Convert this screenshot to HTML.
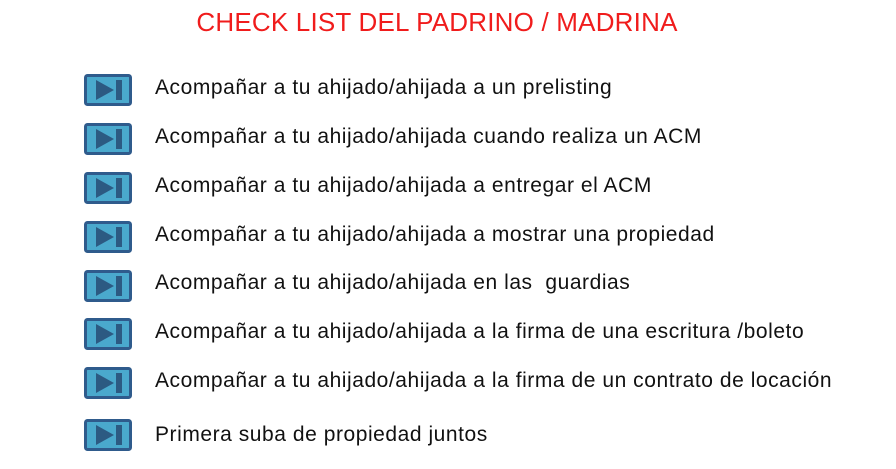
<!DOCTYPE html>
<html><head><meta charset="utf-8"><style>
body{margin:0;width:896px;height:469px;background:#fff;position:relative;overflow:hidden;font-family:"Liberation Sans",sans-serif}
.t{position:absolute;left:0;width:874px;top:7px;text-align:center;color:#f01c1c;font-size:26px;line-height:30px;letter-spacing:0.2px}
.i{position:absolute;left:84px;width:48px;height:32px}
.x{position:absolute;left:155px;font-size:21px;color:#111;white-space:nowrap;line-height:24px;letter-spacing:0.55px}
</style></head><body>
<div class="t">CHECK LIST DEL PADRINO / MADRINA</div>
<svg width="0" height="0" style="position:absolute"><defs><symbol id="ic" viewBox="0 0 48 32"><rect x="1.5" y="1.5" width="45" height="29" rx="2" fill="#4aa9cd" stroke="#2f5b8c" stroke-width="3"/><path d="M12 6 L30 16 L12 26 Z" fill="#2c5a82"/><rect x="32" y="6" width="6" height="20" fill="#2c5a82"/></symbol></defs></svg>
<svg class="i" style="top:74px"><use href="#ic"/></svg><div class="x" style="top:76px">Acompañar a tu ahijado/ahijada a un prelisting</div>
<svg class="i" style="top:123px"><use href="#ic"/></svg><div class="x" style="top:125px">Acompañar a tu ahijado/ahijada cuando realiza un ACM</div>
<svg class="i" style="top:172px"><use href="#ic"/></svg><div class="x" style="top:174px">Acompañar a tu ahijado/ahijada a entregar el ACM</div>
<svg class="i" style="top:221px"><use href="#ic"/></svg><div class="x" style="top:223px">Acompañar a tu ahijado/ahijada a mostrar una propiedad</div>
<svg class="i" style="top:270px"><use href="#ic"/></svg><div class="x" style="top:271px">Acompañar a tu ahijado/ahijada en las&nbsp; guardias</div>
<svg class="i" style="top:318px"><use href="#ic"/></svg><div class="x" style="top:320px">Acompañar a tu ahijado/ahijada a la firma de una escritura /boleto</div>
<svg class="i" style="top:367px"><use href="#ic"/></svg><div class="x" style="top:369px">Acompañar a tu ahijado/ahijada a la firma de un contrato de locación</div>
<svg class="i" style="top:419px"><use href="#ic"/></svg><div class="x" style="top:423px">Primera suba de propiedad juntos</div>
</body></html>
